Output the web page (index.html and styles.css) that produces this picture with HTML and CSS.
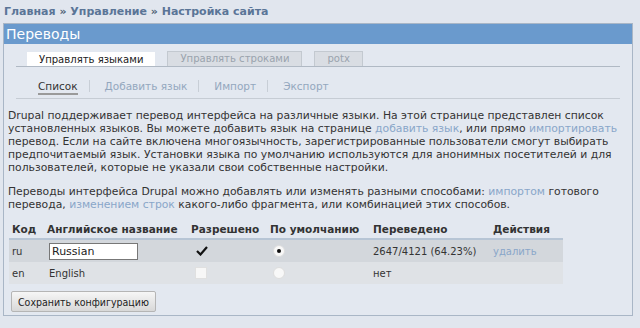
FILE: index.html
```html
<!DOCTYPE html>
<html lang="ru">
<head>
<meta charset="UTF-8">
<title>Переводы</title>
<link rel="stylesheet" href="styles.css">
</head>
<body>
    <div class="breadcrumb">
        <a href="#">Главная</a> » <a href="#">Управление</a> » <a href="#">Настройка сайта</a>
    </div>

    <div class="box">
        <h2 class="box-title">Переводы</h2>
        <div class="box-body">
            <ul class="tabs">
                <li class="active"><a href="#">Управлять языками</a></li>
                <li><a href="#">Управлять строками</a></li>
                <li><a href="#">potx</a></li>
            </ul>
            <ul class="subtabs">
                <li class="active"><a href="#">Список</a></li>
                <li><a href="#">Добавить язык</a></li>
                <li><a href="#">Импорт</a></li>
                <li><a href="#">Экспорт</a></li>
            </ul>

            <p>Drupal поддерживает перевод интерфейса на различные языки. На этой странице представлен список установленных языков. Вы можете добавить язык на странице <a href="#">добавить язык</a>, или прямо <a href="#">импортировать</a> перевод. Если на сайте включена многоязычность, зарегистрированные пользователи смогут выбирать предпочитаемый язык. Установки языка по умолчанию используются для анонимных посетителей и для пользователей, которые не указали свои собственные настройки.</p>
            <p>Переводы интерфейса Drupal можно добавлять или изменять разными способами: <a href="#">импортом</a> готового перевода, <a href="#">изменением строк</a> какого-либо фрагмента, или комбинацией этих способов.</p>

            <table class="languages">
                <thead>
                    <tr>
                        <th class="col-code">Код</th>
                        <th class="col-name">Английское название</th>
                        <th class="col-enabled">Разрешено</th>
                        <th class="col-default">По умолчанию</th>
                        <th class="col-done">Переведено</th>
                        <th>Действия</th>
                    </tr>
                </thead>
                <tbody>
                    <tr class="odd">
                        <td>ru</td>
                        <td><span class="text-input">Russian</span></td>
                        <td><span class="check checked"><svg width="12" height="10" viewBox="0 0 12 10"><path d="M1 5 L4.5 8.5 L11 1" fill="none" stroke="#111" stroke-width="2.2"/></svg></span></td>
                        <td><span class="radio checked"></span></td>
                        <td>2647/4121 (64.23%)</td>
                        <td><a href="#">удалить</a></td>
                    </tr>
                    <tr class="even">
                        <td>en</td>
                        <td class="name">English</td>
                        <td><span class="check"></span></td>
                        <td><span class="radio"></span></td>
                        <td>нет</td>
                        <td></td>
                    </tr>
                </tbody>
            </table>

            <button class="submit">Сохранить конфигурацию</button>
        </div>
    </div>
</body>
</html>
```

FILE: styles.css
```css
body {
    font-family: "DejaVu Sans", sans-serif;
    font-size: 10.8px;
    background-color: #e1e6ee;
    color: #333333;
    margin: 0;
    padding: 4px 7px 0 3px;
}
a {
    color: #89a6c9;
    text-decoration: none;
}
.breadcrumb {
    font-size: 11px;
    font-weight: bold;
    color: #4d5f75;
    padding: 0 0 4px 1px;
    line-height: 15px;
}
.breadcrumb a {
    color: #5a7597;
}
.box {
    border: 1px solid #a9b6c6;
    background-color: #e3e8f0;
}
.box-title {
    margin: 0;
    background-color: #6a9acd;
    color: #ffffff;
    font-weight: normal;
    font-size: 14px;
    line-height: 20px;
    padding: 0 2px;
}
.box-body {
    padding: 7px 4px 3px 4px;
}
.tabs {
    list-style: none;
    margin: 0 8px 0 8px;
    padding: 0 0 0 11px;
    display: flex;
    gap: 12px;
    align-items: flex-end;
    border-bottom: 1px solid #b0b9c4;
    height: 15px;
    font-family: "DejaVu Sans Condensed", "DejaVu Sans", sans-serif;
    font-size: 11.2px;
}
.tabs li a {
    display: block;
    padding: 0 12px;
    line-height: 14px;
    border: 1px solid #c3c9d0;
    border-bottom: none;
    background-color: #d9dde3;
    color: #9aa3ad;
}
.tabs li.active a {
    padding: 0 11px;
    background-color: #ffffff;
    border-color: #ffffff;
    color: #222222;
    line-height: 13px;
}
.subtabs {
    list-style: none;
    margin: 0 8px;
    padding: 13px 0 6px 22px;
    display: flex;
    border-bottom: 1px solid #c6ccd4;
    font-size: 10.5px;
}
.subtabs li {
    padding: 0 11px 0 0;
    margin-right: 15px;
    border-right: 1px solid #c8ced6;
    line-height: 12px;
}
.subtabs li:last-child {
    border-right: none;
}
.subtabs li a {
    color: #93a7be;
}
.subtabs li.active a {
    color: #333333;
    border-bottom: 2px solid #9a9a9a;
    padding-bottom: 1px;
}
p {
    margin: 10px 0 11px 0;
    line-height: 13px;
    padding-right: 4px;
}
.languages {
    border-collapse: collapse;
    table-layout: fixed;
    margin: 0 0 5px 1px;
    width: 554px;
    font-size: 10px;
}
.languages th {
    box-sizing: border-box;
    font-size: 10.5px;
    font-weight: bold;
    text-align: left;
    padding: 0 3px 1px 3px;
    border-bottom: 2px solid #b7c5d5;
    line-height: 15px;
}
.languages .col-code {
    width: 35px;
}
.languages .col-name {
    width: 144px;
}
.languages .col-enabled {
    width: 79px;
}
.languages .col-default {
    width: 103px;
}
.languages .col-done {
    width: 120px;
}
.languages td {
    padding: 0 3px;
    height: 22px;
    white-space: nowrap;
}
.languages td.name {
    padding-left: 5px;
}
.languages tr.odd td {
    background-color: #d3d7dc;
}
.languages tr.even td {
    background-color: #dfe2e6;
}
.text-input {
    display: inline-block;
    width: 83px;
    height: 15px;
    line-height: 15px;
    margin-left: 2px;
    padding: 0 2px;
    background-color: #ffffff;
    border: 1px solid #777777;
    font-size: 11px;
    color: #222222;
    vertical-align: middle;
}
.check {
    display: inline-block;
    width: 10px;
    height: 10px;
    margin-left: 4px;
    vertical-align: middle;
    background-color: #f7f7f7;
    border: 1px solid #e0e0e0;
}
.check.checked {
    width: 12px;
    background: none;
    border-color: transparent;
}
.check svg {
    display: block;
}
.radio {
    display: inline-block;
    width: 10px;
    height: 10px;
    margin-left: 3px;
    vertical-align: middle;
    border-radius: 50%;
    background-color: #f8f8f8;
    border: 1px solid #dddddd;
    position: relative;
}
.radio.checked::after {
    content: "";
    position: absolute;
    left: 3px;
    top: 3px;
    width: 4px;
    height: 4px;
    border-radius: 50%;
    background-color: #111111;
}
.submit {
    font-family: "DejaVu Sans Condensed", "DejaVu Sans", sans-serif;
    font-size: 10.5px;
    color: #222222;
    margin: 2px 0 0 3px;
    padding: 0 6px;
    height: 21px;
    border: 1px solid #b5b5b5;
    border-radius: 2px;
    background: linear-gradient(#f6f6f6, #d8d8d8);
}
```
